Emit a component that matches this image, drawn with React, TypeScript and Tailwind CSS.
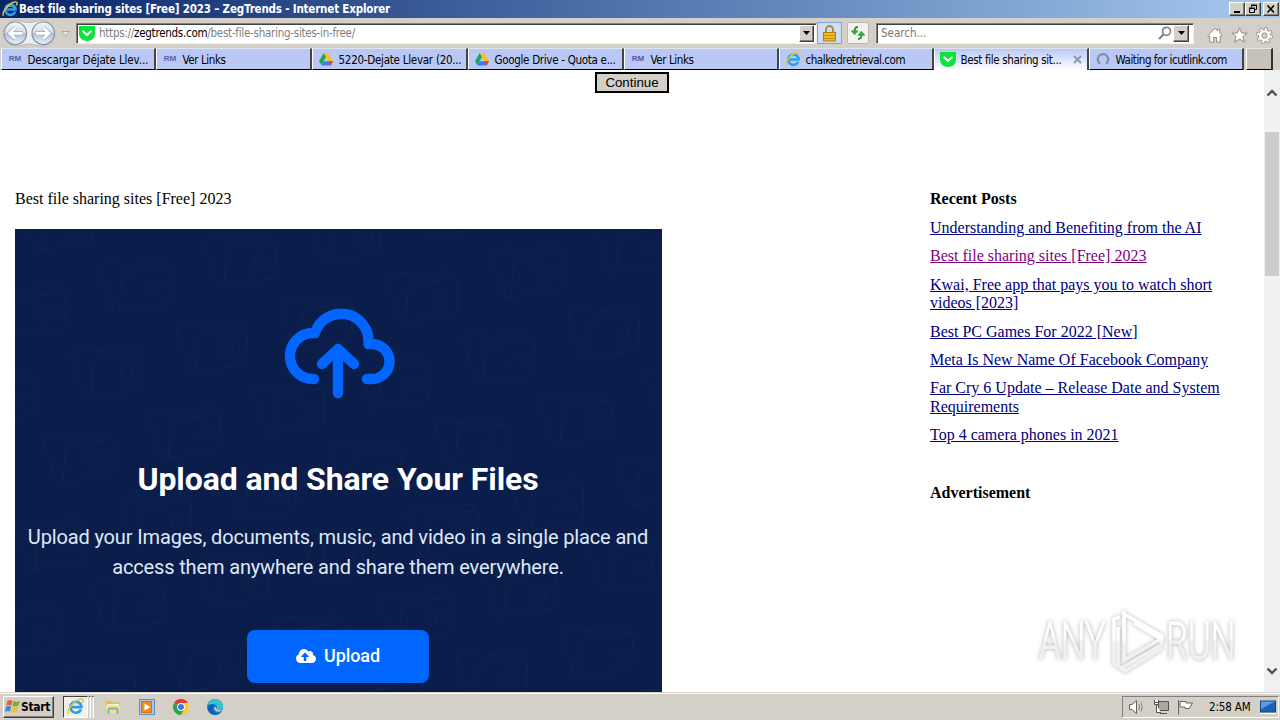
import type { ReactNode } from "react";
import clsx from "clsx";
import { FaCloudUploadAlt } from "react-icons/fa";

type TabKind = "rm" | "drive" | "ie" | "pocket" | "loading";

interface Tab {
  kind: TabKind;
  title: string;
  width: string;
  tracking: string;
  active?: boolean;
}

const tabs: Tab[] = [
  { kind: "rm", title: "Descargar Déjate Llev...", width: "w-[155px]", tracking: "tracking-[-0.12px]" },
  { kind: "rm", title: "Ver Links", width: "w-[156px]", tracking: "tracking-[-0.4px]" },
  { kind: "drive", title: "5220-Dejate Llevar (20...", width: "w-[156px]", tracking: "tracking-[-0.26px]" },
  { kind: "drive", title: "Google Drive - Quota e...", width: "w-[156px]", tracking: "tracking-[-0.3px]" },
  { kind: "rm", title: "Ver Links", width: "w-[155px]", tracking: "tracking-[-0.4px]" },
  { kind: "ie", title: "chalkedretrieval.com", width: "w-[155px]", tracking: "tracking-[-0.45px]" },
  { kind: "pocket", title: "Best file sharing sit...", width: "w-[155px]", tracking: "tracking-[-0.35px]", active: true },
  { kind: "loading", title: "Waiting for icutlink.com", width: "w-[155px]", tracking: "tracking-[-0.46px]" },
];

const posts = [
  { title: "Understanding and Benefiting from the AI" },
  { title: "Best file sharing sites [Free] 2023", visited: true },
  { title: "Kwai, Free app that pays you to watch short videos [2023]" },
  { title: "Best PC Games For 2022 [New]" },
  { title: "Meta Is New Name Of Facebook Company" },
  { title: "Far Cry 6 Update – Release Date and System Requirements" },
  { title: "Top 4 camera phones in 2021" },
];

function IeIcon({ size = 16 }: { size?: number }) {
  return (
    <svg width={size} height={size} viewBox="0 0 16 16" fill="none" className="shrink-0">
      <path d="M13.2 10.7A5.2 5.2 0 1 1 13.6 8.6H4.5" stroke="#2f9fdf" strokeWidth="2.5" />
      <path d="M4.3 7.2C5 4.6 11 4.6 12 7.2" stroke="#8fd6f8" strokeWidth="0.8" />
      <path d="M1.6 14.8C-1 12.4 5.6 3.4 11.8 1.2C15.4 0 15.6 2.2 14.4 4.4" stroke="#f2c230" strokeWidth="1.4" />
    </svg>
  );
}

function PocketIcon() {
  return (
    <svg width="16" height="15" viewBox="0 0 16 15" fill="none" className="shrink-0">
      <path d="M0 0H16V7.5C16 12 12.5 15 8 15S0 12 0 7.5Z" fill="#0be43c" />
      <path d="M4.3 5.5L8 9L11.7 5.5" stroke="#fff" strokeWidth="2.2" strokeLinecap="round" strokeLinejoin="round" />
    </svg>
  );
}

function DriveIcon() {
  return (
    <svg width="14" height="13" viewBox="0 0 14 13" className="shrink-0">
      <path d="M4.7 0H9.3L7 4L2.4 12L0 8.2Z" fill="#1fa463" />
      <path d="M4.7 0H9.3L14 8.2H9.3Z" fill="#fbc116" />
      <path d="M4.6 8.2H14L11.6 12.4H2.4Z" fill="#3b7ded" />
      <path d="M9.3 8.2H14L11.6 12.4Z" fill="#ea4335" />
    </svg>
  );
}

function TabIcon({ kind }: { kind: TabKind }) {
  if (kind === "rm")
    return <span className="w-4 text-center font-['Liberation_Sans'] text-[8px] leading-none font-bold text-[#5a5aa6]">RM</span>;
  if (kind === "drive") return <span className="flex w-4 justify-center"><DriveIcon /></span>;
  if (kind === "ie") return <IeIcon />;
  if (kind === "pocket") return <PocketIcon />;
  return (
    <svg width="16" height="16" viewBox="0 0 16 16" fill="none" className="shrink-0">
      <path d="M5 12.6A5.2 5.2 0 1 1 11 12.6" stroke="#7f8da9" strokeWidth="2.2" />
    </svg>
  );
}

function ClassicButton({ children, className }: { children: ReactNode; className?: string }) {
  return (
    <span
      className={clsx(
        "flex shrink-0 items-center justify-center border border-t-white border-l-white border-r-[#404040] border-b-[#404040] bg-[#d4d0c8] shadow-[inset_-1px_-1px_0_#808080]",
        className,
      )}
    >
      {children}
    </span>
  );
}

function Caret() {
  return (
    <svg width="7" height="4" viewBox="0 0 7 4">
      <path d="M0 0H7L3.5 4Z" fill="#000" />
    </svg>
  );
}

function TitleBar() {
  return (
    <div className="flex h-[18px] shrink-0 items-center bg-linear-to-r from-[#0a246a] to-[#a6caf0] pr-px pl-0.5">
      <IeIcon />
      <span className="ml-px pt-px text-[11.5px] leading-none font-bold tracking-[-0.18px] whitespace-nowrap text-white">
        Best file sharing sites [Free] 2023 – ZegTrends - Internet Explorer
      </span>
      <div className="ml-auto flex">
        <ClassicButton className="h-[14px] w-4">
          <svg width="12" height="10" viewBox="0 0 12 10"><path d="M3 8H9" stroke="#000" strokeWidth="2" /></svg>
        </ClassicButton>
        <ClassicButton className="h-[14px] w-4">
          <svg width="12" height="10" viewBox="0 0 12 10" fill="none" stroke="#000">
            <path d="M4.5 3V1.5H9.5V5.5H8M4 1H10M2.5 4.5H7.5V8.5H2.5ZM2 4H8" />
          </svg>
        </ClassicButton>
        <ClassicButton className="ml-0.5 h-[14px] w-4">
          <svg width="12" height="10" viewBox="0 0 12 10"><path d="M2.5 1.5L9 8.5M9 1.5L2.5 8.5" stroke="#000" strokeWidth="1.6" /></svg>
        </ClassicButton>
      </div>
    </div>
  );
}

function NavButtons() {
  return (
    <svg width="74" height="30" viewBox="0 0 74 30" fill="none" className="shrink-0">
      <defs>
        <linearGradient id="orb" x1="0" y1="0" x2="0" y2="1">
          <stop offset="0" stopColor="#f4f7fb" />
          <stop offset="0.48" stopColor="#d5dde8" />
          <stop offset="0.5" stopColor="#b2bfd1" />
          <stop offset="1" stopColor="#e9f5fc" />
        </linearGradient>
      </defs>
      <path d="M15 2.5C21 2.5 24 4.5 29 4.5S37 2.5 43 2.5A13 13 0 0 1 43 28C37 28 34 26 29 26S21 28 15 28A13 13 0 0 1 15 2.5Z" fill="#eceff3" stroke="#a9a9ae" strokeWidth="0.8" />
      <circle cx="15.3" cy="15.3" r="11.3" fill="url(#orb)" stroke="#8a93a3" strokeWidth="1.2" />
      <circle cx="43.3" cy="15.3" r="11.3" fill="url(#orb)" stroke="#8a93a3" strokeWidth="1.2" />
      <path d="M23 15.3H10M15.3 9.6L9.4 15.3L15.3 21" stroke="#98a4b6" strokeWidth="4" />
      <path d="M22.6 15.3H10M15.3 9.8L9.6 15.3L15.3 20.8" stroke="#fff" strokeWidth="2.8" />
      <path d="M35.4 15.3H48.6M43.3 9.6L49.2 15.3L43.3 21" stroke="#98a4b6" strokeWidth="4" />
      <path d="M35.8 15.3H48.6M43.3 9.8L49 15.3L43.3 20.8" stroke="#fff" strokeWidth="2.8" />
      <path d="M61.5 13.5H69.5L65.5 18Z" fill="#e8e6e2" stroke="#a5a19b" strokeWidth="0.9" />
    </svg>
  );
}

function Toolbar() {
  return (
    <div className="flex h-[30px] shrink-0 items-center">
      <NavButtons />
      <div className="ml-0.5 flex h-[21px] w-[741px] items-center border border-t-[#808080] border-l-[#808080] border-r-[#f1efec] border-b-[#f1efec] bg-white pr-0.5 pl-0.5 shadow-[inset_1px_1px_0_#404040]">
        <PocketIcon />
        <span className="ml-1 pt-0.5 text-[11.5px] leading-none tracking-[-0.26px] whitespace-nowrap text-[#808080]">
          https://<span className="text-black">zegtrends.com</span>/best-file-sharing-sites-in-free/
        </span>
        <ClassicButton className="ml-auto h-[17px] w-[15px]"><Caret /></ClassicButton>
      </div>
      <span className="flex h-[22px] w-[25px] shrink-0 items-center justify-center border border-[#78a5dc] bg-[#cfdff3]">
        <svg width="15" height="17" viewBox="0 0 15 17" fill="none">
          <path d="M4 8V4.5A3.5 3.5 0 0 1 11 4.5V8" stroke="#a68b45" strokeWidth="1.9" />
          <rect x="1.5" y="7.5" width="12" height="8.5" fill="#f3bb28" stroke="#b67d12" />
          <path d="M2 10.5H13M2 13.5H13" stroke="#c98c18" />
        </svg>
      </span>
      <span className="ml-[5px] flex h-[22px] w-[22px] shrink-0 items-center justify-center rounded-xs border border-[#b9b7b2] bg-[#f2f1ee]">
        <svg width="16" height="14" viewBox="0 0 16 14" fill="none" stroke="#2e8f39">
          <path d="M8 1C5.5 1 4.6 2.5 4.6 5" strokeWidth="1.8" />
          <path d="M1.2 4.8H8L4.6 8.8Z" fill="#3daa47" strokeWidth="0.6" />
          <path d="M8 13C10.5 13 11.4 11.5 11.4 9" strokeWidth="1.8" />
          <path d="M8 9.2H14.8L11.4 5.2Z" fill="#3daa47" strokeWidth="0.6" />
        </svg>
      </span>
      <div className="ml-[7px] flex h-[21px] w-[318px] shrink-0 items-center border border-t-[#808080] border-l-[#808080] border-r-[#f1efec] border-b-[#f1efec] bg-white pl-1 shadow-[inset_1px_1px_0_#404040]">
        <span className="pt-0.5 text-[11.5px] leading-none tracking-[0px] text-[#777]">Search...</span>
        <svg width="14" height="14" viewBox="0 0 14 14" fill="none" stroke="#85858a" className="ml-auto">
          <circle cx="8.5" cy="5.3" r="4" strokeWidth="1.7" />
          <path d="M5.6 8.4L1 13" strokeWidth="2.2" />
        </svg>
        <ClassicButton className="mr-1 ml-px h-[17px] w-4"><Caret /></ClassicButton>
      </div>
      <div className="ml-[13px] flex items-center gap-2 pt-1">
        <svg width="16" height="16" viewBox="0 0 16 16" fill="#fff" stroke="#8f8c88">
          <path d="M0.8 8.6L8 1.2L10.6 3.8V2.2H12.8V6L15.2 8.6L14 9.6L13.2 8.9V15.2H9.6V10.5H6.6V15.2H2.8V8.9L2 9.6Z" />
        </svg>
        <svg width="17" height="16" viewBox="0 0 17 16" fill="#fff" stroke="#8f8c88">
          <path d="M8.5 0.8L10.6 5.9L16.2 6.2L11.9 9.6L13.4 15.1L8.5 12L3.6 15.1L5.1 9.6L0.8 6.2L6.4 5.9Z" />
        </svg>
        <svg width="17" height="17" viewBox="0 0 17 17" fill="none">
          <circle cx="8.5" cy="8.5" r="6.9" stroke="#8f8c88" strokeWidth="3" strokeDasharray="3 2.42" />
          <circle cx="8.5" cy="8.5" r="4.3" stroke="#8f8c88" strokeWidth="4.2" />
          <circle cx="8.5" cy="8.5" r="6.6" stroke="#fff" strokeWidth="2" strokeDasharray="2 3.18" strokeDashoffset="-0.4" />
          <circle cx="8.5" cy="8.5" r="4.3" stroke="#fff" strokeWidth="2.8" />
        </svg>
      </div>
    </div>
  );
}

function TabStrip() {
  return (
    <div className="flex h-[22px] shrink-0 bg-[#d4d0c8] pl-px">
      {tabs.map((tab, i) => (
        <div
          key={i}
          className={clsx(
            "flex shrink-0 items-center border-t border-r-2 border-l border-t-[#dfe4f0] border-r-[#464342] border-l-white pl-[5px]",
            tab.width,
            tab.active
              ? "bg-linear-to-b from-[#b8c9f5] to-white"
              : "border-b border-b-black bg-[#b9c8f5]",
          )}
        >
          <TabIcon kind={tab.kind} />
          <span className={clsx("ml-[4.5px] pt-[3px] text-[11.5px] leading-none whitespace-nowrap text-black", tab.tracking)}>
            {tab.title}
          </span>
          {tab.active && (
            <svg width="9" height="9" viewBox="0 0 9 9" className="mr-[5px] ml-auto">
              <path d="M1 1L8 8M8 1L1 8" stroke="#8d93a9" strokeWidth="1.8" />
            </svg>
          )}
        </div>
      ))}
      <div className="ml-0.5 w-[27px] border border-r-2 border-t-[#e8e6e2] border-r-[#33302e] border-b-black border-l-white bg-[#c6c1ba]" />
    </div>
  );
}

// Folder outlines are laid on a skewed grid behind the banner text.
const folders: { x: number; y: number; n: number }[] = [];
for (let i = -6; i < 10; i++) {
  for (let j = -3; j < 10; j++) {
    const x = 122 + i * 105 + j * 77;
    const y = 54 - i * 25 + j * 61;
    if (x > -50 && x < 700 && y > -40 && y < 500) folders.push({ x, y, n: (i + j * 2 + 30) % 3 });
  }
}

function FolderPattern() {
  return (
    <svg width="647" height="463" viewBox="0 0 647 463" fill="none" className="absolute inset-0" stroke="#0c2452" strokeWidth="1.2">
      {folders.map((f) => (
        <g key={`${f.x}-${f.y}`} transform={`translate(${f.x} ${f.y}) rotate(-9)`}>
          <path d="M-22 25H-25Q-28 25-29 20L-35-19Q-35-24-30-24H-15L-10-19H26Q30-19 31-14V-10M-22 25L-15-7Q-14-11-10-11H30Q36-11 35-6L30 20Q29 25 24 25Z" />
          {f.n === 0 && <path d="M6 12L14 2L20 8M16 14L22 4L27 9" />}
          {f.n === 1 && <path d="M12-1V14M22 0V12M12 2L22 0M7 14A3 3 0 1 0 13 14M17 12A3 3 0 1 0 23 12" />}
          {f.n === 2 && <path d="M6 0H24V14H6ZM11 3L19 7L11 11Z" />}
        </g>
      ))}
    </svg>
  );
}

function Banner() {
  return (
    <div className="relative h-[463px] w-[647px] overflow-hidden bg-[#0b1e4b] font-[Roboto,sans-serif] text-white">
      <FolderPattern />
      <div className="relative flex flex-col items-center pr-px">
        <svg width="112" height="92" viewBox="284 308 112 92" fill="none" stroke="#0066ff" strokeWidth="10.4" strokeLinecap="round" strokeLinejoin="round" className="mt-[79px] ml-1">
          <path d="M314 379H313A23 23 0 0 1 313 333H315A27.4 27.4 0 0 1 368.500 343V344H372A17.500 17.500 0 0 1 372 379H367" />
          <path d="M338 350V393M322 364L338 349L354 364" />
        </svg>
        <h1 className="mt-[59px] text-[32px] leading-10 font-bold tracking-[-0.1px] whitespace-nowrap">Upload and Share Your Files</h1>
        <p className="mt-[23px] text-center text-[20px] leading-[30px] tracking-[-0.14px] whitespace-nowrap text-[#dfe8f8]">
          Upload your Images, documents, music, and video in a single place and
          <br />
          access them anywhere and share them everywhere.
        </p>
        <button className="mt-[48px] flex h-[53px] w-[182px] items-center justify-center gap-2 rounded-[8px] bg-[#0066ff] pb-0.5 text-[18px] font-medium tracking-[-0.1px]">
          <FaCloudUploadAlt size={20} />
          Upload
        </button>
      </div>
    </div>
  );
}

function Watermark() {
  return (
    <svg width="230" height="80" viewBox="0 0 230 80" className="absolute top-[603px] left-[1030px]">
      <defs>
        <linearGradient id="fade" gradientUnits="userSpaceOnUse" x1="0" y1="0" x2="0" y2="76">
          <stop offset="0.46" stopColor="#fff" />
          <stop offset="0.54" stopColor="#f1f1f1" />
        </linearGradient>
        <linearGradient id="fadeText" gradientUnits="userSpaceOnUse" x1="0" y1="-38" x2="0" y2="0">
          <stop offset="0.45" stopColor="#fff" />
          <stop offset="0.55" stopColor="#f1f1f1" />
        </linearGradient>
      </defs>
      <g fill="none" stroke="url(#fade)" strokeWidth="3.6" strokeLinejoin="round" className="drop-shadow-[0_0_2px_rgba(0,0,0,0.28)]">
        <path d="M90 14L84 16V60L95 68L132 45" />
        <path d="M88 62V24M94 8V57L131 36L104 20M92 10L132 33L131 42L92 65" />
      </g>
      <g fill="url(#fadeText)" stroke="url(#fadeText)" strokeWidth="0.8" className="font-[Roboto,sans-serif] text-[51px] font-light drop-shadow-[0_0_2px_rgba(0,0,0,0.32)]">
        <text transform="translate(9 56) scale(0.68 1)">ANY</text>
        <text transform="translate(136 56) scale(0.68 1)">RUN</text>
      </g>
    </svg>
  );
}

function Page() {
  return (
    <div className="flex min-h-0 flex-1 bg-white">
      <main className="flex-1 overflow-hidden font-['Liberation_Serif',serif] text-[16px] leading-[18.4px] text-black">
        <div className="flex h-[120px] justify-center pt-0.5">
          <button className="h-[21px] w-[74px] border-2 border-black bg-[#d4d0c8] font-['Liberation_Sans',sans-serif] text-[13.3px] leading-none">
            Continue
          </button>
        </div>
        <div className="flex">
          <div className="w-[915px] shrink-0 pl-[15px]">
            <p className="mb-[21px]">Best file sharing sites [Free] 2023</p>
            <Banner />
          </div>
          <aside className="w-[310px] pl-[15px]">
            <h2 className="mb-[10.5px] font-bold">Recent Posts</h2>
            <ul className="space-y-[10px]">
              {posts.map((p) => (
                <li key={p.title}>
                  <a href="#" className={clsx("underline", p.visited ? "text-[#800080]" : "text-[#000080]")}>
                    {p.title}
                  </a>
                </li>
              ))}
            </ul>
            <h2 className="mt-[39.5px] font-bold">Advertisement</h2>
          </aside>
        </div>
      </main>
      <div className="flex w-4 flex-col items-center bg-[#f0f0f0] pt-[19px] pb-[17px]">
        <svg width="12" height="8" viewBox="0 0 12 8" fill="none" className="shrink-0"><path d="M1.500 6.500L6 2L10.500 6.500" stroke="#505050" strokeWidth="2.4" /></svg>
        <div className="mt-[35px] h-[144px] w-[14px] bg-[#cdcdcd]" />
        <svg width="12" height="8" viewBox="0 0 12 8" fill="none" className="mt-auto shrink-0"><path d="M1.500 1.500L6 6L10.500 1.500" stroke="#505050" strokeWidth="2.4" /></svg>
      </div>
    </div>
  );
}

function Taskbar() {
  return (
    <div className="flex h-7 shrink-0 items-center border-t border-[#d4d0c8] bg-[#d4d0c8] pl-[3px] shadow-[inset_0_1px_0_#fff]">
      <ClassicButton className="h-[22px] w-[51px] pr-0.5">
        <svg width="16" height="15" viewBox="0 0 16 15" className="shrink-0">
          <path d="M2.500 1.800Q5 .4 7.600 1.700L6.500 6.600Q4 5.400 1.300 6.800Z" fill="#e9622c" />
          <path d="M8.600 2Q11.500 3.400 14.800 1.800L13.600 6.800Q10.600 8.200 7.500 6.900Z" fill="#6eb43c" />
          <path d="M1.100 7.700Q3.800 6.400 6.200 7.600L5 12.500Q2.700 11.300 0 12.700Z" fill="#3c86d3" />
          <path d="M7.300 8Q10.300 9.200 13.400 7.800L12.200 12.700Q9.300 14.300 6.100 12.900Z" fill="#f6be29" />
        </svg>
        <span className="pt-px text-[12px] leading-none font-bold tracking-[-0.35px] text-black">Start</span>
      </ClassicButton>
      <div className="ml-[9px] flex h-[22px] w-[25px] items-center justify-center border border-t-[#404040] border-l-[#404040] border-r-white border-b-white bg-[#f1efec]">
        <IeIcon size={17} />
      </div>
      <div className="ml-px h-[22px] w-0.5 border-t border-r border-t-[#404040] border-r-white bg-[#e4e1dc]" />
      <div className="ml-px h-[22px] w-0.5 border-t border-r border-t-[#404040] border-r-white bg-[#e4e1dc]" />
      <div className="ml-[11px] flex items-center gap-[18px]">
        <svg width="16" height="16" viewBox="0 0 16 16">
          <path d="M1 2H6L7.500 3.500H14.500V14H1Z" fill="#e3bd4d" />
          <path d="M2 5H14V8H2Z" fill="#fbf3c6" />
          <path d="M.5 6.500H15.500L14.500 14.500H1.500Z" fill="#f7dd83" />
          <path d="M3.500 15V11Q3.500 9.500 5 9.500H11Q12.500 9.500 12.500 11V15" fill="none" stroke="#6fb4dc" strokeWidth="2" />
        </svg>
        <svg width="16" height="16" viewBox="0 0 16 16">
          <rect x=".5" y=".5" width="15" height="15" fill="#a9c8e8" stroke="#5e8fc2" />
          <rect x="2.500" y="2.500" width="10" height="11" fill="#f38a1d" stroke="#d9700f" />
          <path d="M5.500 4.500L11.500 8L5.500 11.500Z" fill="#fff" />
        </svg>
        <svg width="16" height="16" viewBox="0 0 16 16">
          <path d="M8 8L1.070 4A8 8 0 0 1 14.930 4Z" fill="#e33b2e" />
          <path d="M8 8L1.070 4A8 8 0 0 0 8 16L11.500 10Z" fill="#2ba24c" />
          <path d="M8 8L11.500 10L8 16A8 8 0 0 0 14.930 4H8Z" fill="#fcc934" />
          <circle cx="8" cy="8" r="3.900" fill="#fff" />
          <circle cx="8" cy="8" r="3" fill="#3b78e7" />
        </svg>
        <svg width="16" height="16" viewBox="0 0 16 16">
          <circle cx="8" cy="8" r="8" fill="#1377c9" />
          <path d="M.3 6.500C1.500 1.500 5.500 0 8.500 0C13.500.2 16 3.600 16 7C16 10 13.500 11 11.500 11C9.800 11 9.300 10.200 9.800 9.300C10.600 7.500 9 5 6.200 5C3.500 5 1.200 5.500.3 6.500Z" fill="#38c3c5" />
          <path d="M6.200 7.500C4.200 10.500 7.500 15.500 12.800 14.500C9.500 17 2.800 16 1.200 11C.5 8 2.500 5.500 6 5.300C8 5.200 6.900 6.500 6.200 7.500Z" fill="#0f5fb0" />
          <path d="M9.600 9.600C9.200 10.600 10.300 11.300 12 11.200C13.600 11.100 14.800 10.500 15.300 10.100C14.500 12.600 11.500 13.200 9.200 12.200C7.200 11.200 6.800 9 8 7.500Z" fill="#d4d0c8" />
        </svg>
      </div>
      <div className="mr-px ml-auto flex h-[22px] w-[157px] items-center border border-t-[#808080] border-l-[#808080] border-r-white border-b-white pl-[5px]">
        <svg width="18" height="16" viewBox="0 0 18 16" fill="#fff" stroke="#68655f">
          <path d="M1.500 5.500H4L8.500 1.500V14.500L4 10.500H1.500Z" />
          <path d="M10.800 5Q12.500 8 10.800 11M13 3.500Q15.500 8 13 12.500" fill="none" stroke="#85827c" />
        </svg>
        <svg width="17" height="16" viewBox="0 0 17 16" fill="#fff" stroke="#55524d" className="ml-[7px]">
          <path d="M5.500 2.500H15.500V11.500H5.500Z" fill="#a9a6a1" />
          <path d="M7 14.500H14M1.500 1V5.500H5.500V1M3.500 5.500V13.500H8M1.500 3.500H5.500" />
        </svg>
        <svg width="18" height="16" viewBox="0 0 18 16" fill="#fff" stroke="#68655f" className="ml-[7px]">
          <path d="M1.500 1V15.500M3 2.500H9V4H15.500L13.500 7L12.500 9.500H8V8H3Z" />
        </svg>
        <span className="ml-[14px] pt-0.5 text-[11.5px] leading-none tracking-[-0.15px] whitespace-nowrap text-black">2:58 AM</span>
        <svg width="16" height="14" viewBox="0 0 16 14" className="mr-0.5 ml-auto">
          <rect x=".5" y="1" width="15" height="11" fill="#1e62b5" stroke="#164480" />
          <path d="M1 1.500H15L1 9Z" fill="#5b9ee2" />
          <path d="M0 13.500H16" stroke="#fff" />
        </svg>
      </div>
    </div>
  );
}

export default function App() {
  return (
    <div className="relative flex h-[720px] w-[1280px] flex-col overflow-hidden bg-[#d4d0c8] font-['DejaVu_Sans_Condensed','DejaVu_Sans',sans-serif]">
      <TitleBar />
      <Toolbar />
      <TabStrip />
      <Page />
      <Taskbar />
      <Watermark />
    </div>
  );
}
